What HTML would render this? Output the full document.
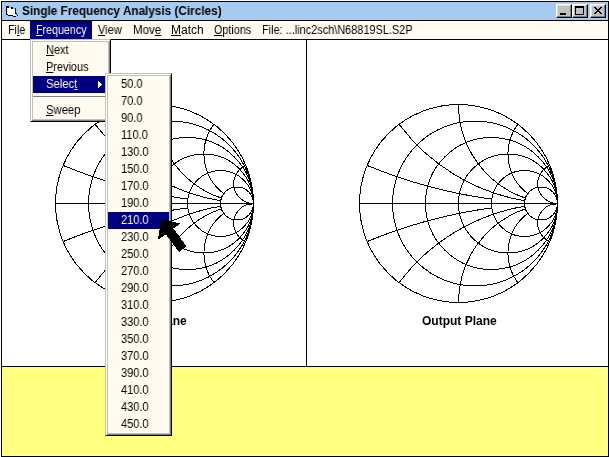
<!DOCTYPE html>
<html><head><meta charset="utf-8">
<style>
*{margin:0;padding:0;box-sizing:border-box}
html,body{width:609px;height:457px;overflow:hidden;background:#fff;font-family:"Liberation Sans",sans-serif;font-size:11px;color:#000}
.a{position:absolute}
.t{position:absolute;white-space:nowrap;line-height:20px;font-size:12px;transform-origin:0 0;will-change:transform}
.b{font-weight:bold}
u{text-decoration:underline;text-decoration-thickness:1px;text-underline-offset:1px;text-decoration-skip-ink:none}
</style></head><body>
<!-- window frame -->
<div class="a" style="left:1px;top:1px;width:608px;height:456px;background:#000"></div>
<!-- title bar -->
<div class="a" style="left:2px;top:2px;width:606px;height:18px;background:#A6CAF0"></div>
<!-- icon -->
<svg class="a" style="left:0;top:0" width="22" height="20" shape-rendering="crispEdges">
<rect x="7" y="8" width="8" height="7" fill="#fff"/>
<rect x="6" y="6" width="3" height="2" fill="#000"/>
<rect x="6" y="6" width="1" height="9" fill="#000"/>
<rect x="9" y="7" width="2" height="1" fill="#0ff"/>
<rect x="11" y="7" width="2" height="2" fill="#000"/>
<rect x="13" y="8" width="2" height="1" fill="#0ff"/>
<rect x="15" y="8" width="1" height="6" fill="#000"/>
<rect x="7" y="14" width="1" height="1" fill="#000"/>
<rect x="8" y="15" width="5" height="1" fill="#000"/>
<rect x="13" y="16" width="3" height="1" fill="#000"/>
<rect x="13" y="14" width="3" height="2" fill="#fff"/>
<rect x="16" y="14" width="2" height="1" fill="#808080"/>
<rect x="16" y="13" width="1" height="1" fill="#000"/>
<rect x="17" y="15" width="1" height="1" fill="#000"/>
</svg>
<div class="t b" style="left:22px;top:1px;transform:scaleX(0.98)">Single Frequency Analysis (Circles)</div>
<!-- caption buttons -->
<div class="a btn" style="left:556px;top:4px;width:16px;height:14px"></div>
<div class="a btn" style="left:572px;top:4px;width:16px;height:14px"></div>
<div class="a btn" style="left:590px;top:4px;width:16px;height:14px"></div>
<svg class="a" style="left:0;top:0" width="609" height="20" shape-rendering="crispEdges" fill="#000">
<rect x="560" y="13" width="6" height="2"/>
<rect x="575" y="6" width="9" height="2"/><rect x="575" y="8" width="1" height="7"/><rect x="583" y="8" width="1" height="7"/><rect x="576" y="14" width="7" height="1"/>
<path d="M594 7h2v1h-2zM600 7h2v1h-2zM595 8h2v1h-2zM599 8h2v1h-2zM596 9h4v1h-4zM597 10h2v1h-2zM596 11h4v1h-4zM595 12h2v1h-2zM599 12h2v1h-2zM594 13h2v1h-2zM600 13h2v1h-2z"/>
</svg>
<!-- menu bar -->
<div class="a" style="left:2px;top:21px;width:606px;height:18px;background:#FFFBF0"></div>
<div class="a" style="left:30px;top:21px;width:62px;height:18px;background:#000080"></div>
<div class="t" style="left:8px;top:20px;transform:scaleX(0.89)">Fi<u>l</u>e</div>
<div class="t" style="left:36px;top:20px;color:#fff;transform:scaleX(0.89)"><u>F</u>requency</div>
<div class="t" style="left:98px;top:20px;transform:scaleX(0.92)"><u>V</u>iew</div>
<div class="t" style="left:133px;top:20px;transform:scaleX(0.96)">Mov<u>e</u></div>
<div class="t" style="left:171px;top:20px"><u>M</u>atch</div>
<div class="t" style="left:213.5px;top:20px;transform:scaleX(0.9)"><u>O</u>ptions</div>
<div class="t" style="left:262px;top:20px;transform:scaleX(0.91)">File: ...linc2sch\N68819SL.S2P</div>
<!-- content -->
<div class="a" style="left:2px;top:40px;width:304px;height:326px;background:#fff"></div>
<div class="a" style="left:307px;top:40px;width:301px;height:326px;background:#fff"></div>
<div class="a" style="left:2px;top:367px;width:606px;height:89px;background:#FFFF80"></div>
<svg class="a" style="left:0;top:0" width="609" height="457" fill="none" stroke="#000" stroke-width="1" shape-rendering="crispEdges">
<g>
<circle cx="154.5" cy="203.5" r="99"/>
<circle cx="171.00" cy="203.5" r="82.50"/>
<circle cx="187.50" cy="203.5" r="66.00"/>
<circle cx="204.00" cy="203.5" r="49.50"/>
<circle cx="220.50" cy="203.5" r="33.00"/>
<circle cx="237.00" cy="203.5" r="16.50"/>
<path d="M55.5 203.5H251.0"/>
<rect x="246" y="203" width="6" height="2" fill="#000" stroke="none"/>
<path d="M63.12 165.42A495.00 495.00 0 0 0 187.79 199.12"/>
<path d="M63.12 241.58A495.00 495.00 0 0 1 187.79 207.88"/>
<path d="M95.10 124.30A198.00 198.00 0 0 0 220.73 200.77"/>
<path d="M95.10 282.70A198.00 198.00 0 0 1 220.73 206.23"/>
<path d="M154.50 104.50A99.00 99.00 0 0 0 221.39 198.15"/>
<path d="M154.50 302.50A99.00 99.00 0 0 1 221.39 208.85"/>
<path d="M213.90 124.30A49.50 49.50 0 0 0 223.80 193.60"/>
<path d="M213.90 282.70A49.50 49.50 0 0 1 223.80 213.40"/>
<path d="M245.88 165.42A19.80 19.80 0 0 0 253.50 203.50"/>
<path d="M245.88 241.58A19.80 19.80 0 0 1 253.50 203.50"/>
</g>
<g>
<circle cx="458.5" cy="203.5" r="99"/>
<circle cx="475.00" cy="203.5" r="82.50"/>
<circle cx="491.50" cy="203.5" r="66.00"/>
<circle cx="508.00" cy="203.5" r="49.50"/>
<circle cx="524.50" cy="203.5" r="33.00"/>
<circle cx="541.00" cy="203.5" r="16.50"/>
<path d="M359.5 203.5H555.0"/>
<rect x="550" y="203" width="6" height="2" fill="#000" stroke="none"/>
<path d="M367.12 165.42A495.00 495.00 0 0 0 491.79 199.12"/>
<path d="M367.12 241.58A495.00 495.00 0 0 1 491.79 207.88"/>
<path d="M399.10 124.30A198.00 198.00 0 0 0 524.73 200.77"/>
<path d="M399.10 282.70A198.00 198.00 0 0 1 524.73 206.23"/>
<path d="M458.50 104.50A99.00 99.00 0 0 0 525.39 198.15"/>
<path d="M458.50 302.50A99.00 99.00 0 0 1 525.39 208.85"/>
<path d="M517.90 124.30A49.50 49.50 0 0 0 527.80 193.60"/>
<path d="M517.90 282.70A49.50 49.50 0 0 1 527.80 213.40"/>
<path d="M549.88 165.42A19.80 19.80 0 0 0 557.50 203.50"/>
<path d="M549.88 241.58A19.80 19.80 0 0 1 557.50 203.50"/>
</g>
</svg>
<div class="t b" style="left:122px;top:311px">Input Plane</div>
<div class="t b" style="left:422px;top:311px">Output Plane</div>

<!-- dropdown -->
<div class="a menu" style="left:30px;top:39px;width:81px;height:83px"></div>
<div class="a" style="left:33px;top:76px;width:75px;height:17px;background:#000080"></div>
<div class="a" style="left:33px;top:96px;width:75px;height:1px;background:#808080"></div>
<div class="a" style="left:33px;top:97px;width:75px;height:1px;background:#fff"></div>
<div class="t" style="left:45.5px;top:40px;transform:scaleX(0.92)"><u>N</u>ext</div>
<div class="t" style="left:45.5px;top:57px;transform:scaleX(0.91)"><u>P</u>revious</div>
<div class="t" style="left:45.5px;top:74px;color:#fff;transform:scaleX(0.94)">Selec<u>t</u></div>
<div class="t" style="left:45.5px;top:100px;transform:scaleX(0.94)"><u>S</u>weep</div>
<svg class="a" style="left:98px;top:81px" width="4" height="7" shape-rendering="crispEdges"><path d="M0 0h1v7h-1zM1 1h1v5h-1zM2 2h1v3h-1zM3 3h1v1h-1z" fill="#fff"/></svg>

<!-- submenu -->
<div class="a menu" style="left:105px;top:73px;width:67px;height:363px"></div>
<div class="a" style="left:108px;top:212px;width:61px;height:17px;background:#000080"></div>
<div class="a" style="left:121px;top:76px;line-height:17px;font-size:12px;white-space:nowrap;transform:scaleX(0.92);transform-origin:0 0;will-change:transform">
50.0<br>70.0<br>90.0<br>110.0<br>130.0<br>150.0<br>170.0<br>190.0<br><span style="color:#fff">210.0</span><br>230.0<br>250.0<br>270.0<br>290.0<br>310.0<br>330.0<br>350.0<br>370.0<br>390.0<br>410.0<br>430.0<br>450.0
</div>

<!-- cursor -->
<svg class="a" style="left:0;top:0" width="609" height="457">
<path d="M161 220L165 220L180.5 223.5L173.5 228.5L186.5 246.5L179 252L166 234.5L158 239.5Z" fill="#000" shape-rendering="crispEdges"/>
</svg>
<style>
.btn{background:#C0C0C0;border-style:solid;border-width:1px;border-color:#fff #000 #000 #fff;box-shadow:inset -1px -1px 0 #808080, inset 1px 1px 0 #DFDFDF}
.menu{background:#FFFBF0;border-style:solid;border-width:1px;border-color:#C0C0C0 #000 #000 #C0C0C0;box-shadow:inset 1px 1px 0 #fff, inset -1px -1px 0 #808080, inset 0 0 0 2px #C0C0C0}
</style>
</body></html>
